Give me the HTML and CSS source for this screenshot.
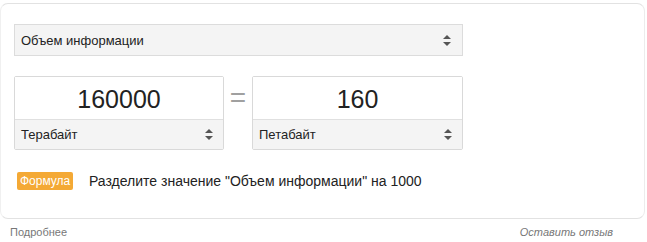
FILE: index.html
```html
<!DOCTYPE html>
<html>
<head>
    <title>Конвертер величин</title>
    <link rel="stylesheet" href="styles.css">
</head>
<body>
    <div class="card">
        <div class="select wide">
            <span>Объем информации</span>
            <svg class="arrows" width="8" height="11" viewBox="0 0 8 11"><path d="M4 0 L8 4 L0 4 Z M0 7 L8 7 L4 11 Z" fill="#555"/></svg>
        </div>

        <div class="converter">
            <div class="unit-box">
                <div class="value">160000</div>
                <div class="select unit">
                    <span>Терабайт</span>
                    <svg class="arrows" width="8" height="11" viewBox="0 0 8 11"><path d="M4 0 L8 4 L0 4 Z M0 7 L8 7 L4 11 Z" fill="#555"/></svg>
                </div>
            </div>
            <div class="equals">=</div>
            <div class="unit-box">
                <div class="value">160</div>
                <div class="select unit">
                    <span>Петабайт</span>
                    <svg class="arrows" width="8" height="11" viewBox="0 0 8 11"><path d="M4 0 L8 4 L0 4 Z M0 7 L8 7 L4 11 Z" fill="#555"/></svg>
                </div>
            </div>
        </div>

        <div class="formula">
            <span class="badge">Формула</span>
            <span class="formula-text">Разделите значение "Объем информации" на 1000</span>
        </div>
    </div>

    <div class="footer">
        <span>Подробнее</span>
        <span class="feedback">Оставить отзыв</span>
    </div>
</body>
</html>
```

FILE: styles.css
```css
body {
    margin: 0;
    background: #fff;
    font-family: "Liberation Sans", Arial, sans-serif;
    color: #222;
}
.card {
    margin-top: 3px;
    width: 645px;
    height: 216px;
    box-sizing: border-box;
    border: 1px solid #e2e2e2;
    border-left-color: #f0f0f0;
    border-right-color: #ececec;
    border-radius: 8px;
    padding: 20px 13px 0;
}
.select {
    display: flex;
    align-items: center;
    justify-content: space-between;
    box-sizing: border-box;
    background: #f4f4f4;
    font-size: 13px;
    color: #222;
}
.select.wide {
    width: 449px;
    height: 32px;
    border: 1px solid #dcdcdc;
    padding: 0 11px 0 6px;
}
.arrows { display: block; }
.converter {
    display: grid;
    grid-template-columns: 210px 28px 211px;
    margin-top: 20px;
}
.unit-box {
    border: 1px solid #d9d9d9;
    border-radius: 2px;
    height: 74px;
    box-sizing: border-box;
    display: flex;
    flex-direction: column;
}
.value {
    height: 42px;
    border-bottom: 1px solid #e0e0e0;
    background: #fff;
    font-size: 25px;
    line-height: 44px;
    text-align: center;
    color: #222;
}
.select.unit {
    flex: 1;
    padding: 0 10px 0 6px;
}
.equals {
    text-align: center;
    font-size: 28px;
    line-height: 44px;
    color: #a0a0a0;
}
.formula {
    display: flex;
    align-items: center;
    margin-top: 22px;
    padding-left: 3px;
}
.badge {
    background: #f4a935;
    color: #fff;
    font-size: 12px;
    line-height: 18px;
    padding: 0 3px;
    border-radius: 2px;
    width: 50px;
    text-align: center;
}
.formula-text {
    margin-left: 16px;
    font-size: 14px;
    color: #222;
}
.footer {
    display: flex;
    justify-content: space-between;
    padding: 7px 34px 0 10px;
    font-size: 11px;
    color: #777;
}
.feedback { font-style: italic; }
```
